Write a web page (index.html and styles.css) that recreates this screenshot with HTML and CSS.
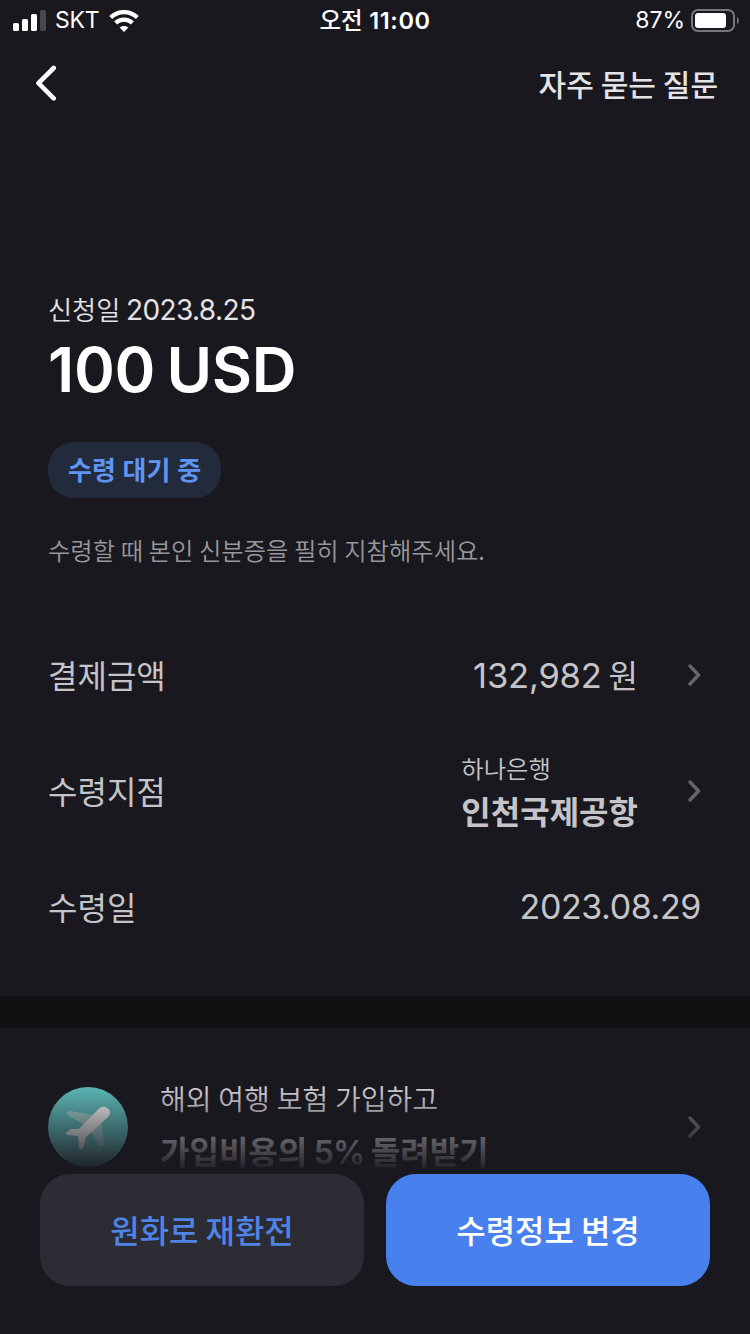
FILE: index.html
```html
<!DOCTYPE html>
<html lang="ko">
<head>
<meta charset="utf-8">
<title>환전 내역</title>
<link rel="stylesheet" href="styles.css">
</head>
<body>
<div class="screen">
  <header class="status">
    <div class="status-left">
      <svg class="signal" width="34" height="22" viewBox="0 0 34 22" fill="#fff">
        <rect x="0" y="13" width="6" height="8" rx="1.6"/>
        <rect x="9" y="9" width="6" height="12" rx="1.6"/>
        <rect x="18" y="4" width="6" height="17" rx="1.6"/>
        <rect x="27" y="0" width="6" height="21" rx="1.6" fill="#48474d"/>
      </svg>
      <span class="carrier">SKT</span>
      <svg class="wifi" width="30" height="22" viewBox="0 0 30 22" fill="none" stroke="#fff">
        <path d="M1.700 7.500C9.200 .3 20.800 .3 28.300 7.500" stroke-width="4.300"/>
        <path d="M6.600 12.900C11.300 8.500 18.700 8.500 23.400 12.900" stroke-width="4.300"/>
        <path d="M10.600 17.600C13 15.400 17 15.400 19.400 17.600L15 22Z" fill="#fff" stroke="none"/>
      </svg>
    </div>
    <div class="time"><span class="ko">오전</span> <span class="num">11:00</span></div>
    <div class="status-right">
      <span class="percent">87%</span>
      <svg class="battery" width="48" height="24" viewBox="0 0 48 24">
        <rect x="1" y="1" width="42" height="21" rx="6" fill="none" stroke="#77767b" stroke-width="2"/>
        <rect x="4" y="4" width="31" height="15" rx="3" fill="#fff"/>
        <path d="M46 8C48.500 9.500 48.500 13.500 46 15Z" fill="#77767b"/>
      </svg>
    </div>
  </header>

  <nav class="nav">
    <svg class="back" width="22" height="38" viewBox="0 0 22 38" fill="none" stroke="#fff" stroke-width="4.600" stroke-linecap="round" stroke-linejoin="round"><path d="M18.700 3L3.500 18.200L18.700 33.400"/></svg>
    <a class="faq">자주 묻는 질문</a>
  </nav>

  <main>
    <section class="summary">
      <p class="applied"><span class="ko">신청일</span> <span class="num">2023.8.25</span></p>
      <h1 class="amount">100 USD</h1>
      <span class="badge">수령 대기 중</span>
      <p class="notice">수령할 때 본인 신분증을 필히 지참해주세요.</p>
    </section>

    <section class="details">
      <div class="row">
        <span class="label">결제금액</span>
        <span class="value"><span class="num">132,982</span> <span class="ko">원</span></span>
        <svg class="chevron" width="14" height="24" viewBox="0 0 14 24"><path d="M2 3L10.500 12L2 21"/></svg>
      </div>
      <div class="row">
        <span class="label">수령지점</span>
        <span class="branch"><span class="bank">하나은행</span><strong class="place">인천국제공항</strong></span>
        <svg class="chevron" width="14" height="24" viewBox="0 0 14 24"><path d="M2 3L10.500 12L2 21"/></svg>
      </div>
      <div class="row">
        <span class="label">수령일</span>
        <span class="date num">2023.08.29</span>
      </div>
    </section>

    <section class="promo">
      <svg class="plane" width="80" height="80" viewBox="0 0 80 80">
        <circle cx="40" cy="40" r="40" fill="#62c4c2"/>
        <path d="M22 24L46 28L44 40L35 37L20 28.500C18 27 19 24 22 24Z" fill="#a5d9d7"/>
        <path d="M53 33L56 56C56 59 53 61 51 59L43 45L43 35Z" fill="#a5d9d7"/>
        <path d="M51 21.500C55 17.500 62 20.500 62 25.500C62 27.500 61 29 59 31L37 51V56L35 61C34 63 31 62 31 60L30 49L20 48C17.500 48 17 46 19 45L23 42L31 42Z" fill="#fff"/>
      </svg>
      <div class="promo-text">
        <span class="promo-top">해외 여행 보험 가입하고</span>
        <strong class="promo-main">가입비용의 <span class="num">5%</span> 돌려받기</strong>
      </div>
      <svg class="chevron" width="14" height="24" viewBox="0 0 14 24"><path d="M2 3L10.500 12L2 21"/></svg>
    </section>
  </main>

  <footer class="actions">
    <div class="fade"></div>
    <div class="buttons">
      <button class="btn secondary">원화로 재환전</button>
      <button class="btn primary">수령정보 변경</button>
    </div>
  </footer>
</div>
</body>
</html>
```
FILE: styles.css
```css
* { box-sizing: border-box; margin: 0; padding: 0; }
body {
  background: #19181e;
  font-family: "Noto Sans CJK KR", sans-serif;
  color: #fff;
}
svg { display: block; flex: none; }
.screen { position: relative; width: 750px; height: 1334px; overflow: hidden; background: #19181e; }
.num { font-family: Inter, sans-serif; }

.status { display: grid; grid-template-columns: 1fr auto 1fr; align-items: center; height: 40px; padding: 1px 11px 0 13px; line-height: 39px; white-space: nowrap; }
.status-left, .status-right { display: flex; align-items: center; }
.status-right { justify-content: flex-end; }
.carrier { margin-left: 8px; font-family: Inter, sans-serif; font-size: 23px; letter-spacing: -.2px; }
.wifi { margin-left: 10px; }
.time { margin-top: -1px; padding-right: 2px; font-size: 23.5px; font-weight: 500; }
.time .num { font-weight: 600; letter-spacing: .6px; }
.percent { margin-right: 6px; font-family: Inter, sans-serif; font-size: 23px; }

.nav { display: flex; justify-content: space-between; align-items: center; height: 88px; padding: 0 32px 0 35px; }
.faq { padding-bottom: 3px; font-size: 30px; line-height: 44px; font-weight: 500; word-spacing: -1.5px; color: #e4e3e6; }

.summary { display: flex; flex-direction: column; align-items: flex-start; padding: 161px 48px 0; white-space: nowrap; }
.applied { height: 40px; line-height: 40px; font-size: 26.2px; font-weight: 350; word-spacing: -1.7px; color: #e3e2e5; }
.applied .num { font-size: 28px; font-weight: 400; letter-spacing: -.6px; }
.amount { margin-top: 1px; height: 80px; line-height: 80px; font-family: Inter, sans-serif; font-size: 62px; font-weight: 600; letter-spacing: -.3px; word-spacing: -4px; }
.badge { margin-top: 32px; height: 56px; padding: 0 20px; border-radius: 26px; background: #212b3c; color: #5f95f2; font-size: 26px; line-height: 53px; font-weight: 700; word-spacing: -.5px; }
.notice { margin-top: 32px; height: 40px; line-height: 39px; font-size: 24.3px; font-weight: 350; word-spacing: -1.2px; color: #98979c; }

.details { padding: 47px 48px 31px; }
.row { display: flex; align-items: center; height: 116px; color: #c5c4c9; font-size: 32px; line-height: 44px; white-space: nowrap; }
.label { margin-right: auto; padding-bottom: 3px; }
.value { padding-bottom: 1px; word-spacing: -2px; }
.value .num { font-size: 34.5px; letter-spacing: -.2px; }
.date { padding-right: 1px; font-size: 34px; letter-spacing: -.4px; }
.branch { display: flex; flex-direction: column; padding-bottom: 3px; }
.bank { font-size: 24.3px; line-height: 40px; font-weight: 350; }
.place { font-size: 32px; line-height: 44px; font-weight: 700; }
.chevron { margin-left: 50px; fill: none; stroke: #66656d; stroke-width: 3.4; stroke-linecap: round; stroke-linejoin: round; }

.promo { display: flex; align-items: center; border-top: 32px solid #101012; padding: 0 48px; height: 230px; color: #e0dfe3; white-space: nowrap; }
.promo-text { display: flex; flex-direction: column; margin-left: 32px; margin-right: auto; padding-bottom: 3px; }
.promo-top { font-size: 28px; line-height: 52px; font-weight: 350; word-spacing: -1px; }
.promo-main { font-size: 32px; line-height: 52px; word-spacing: -2.5px; }
.promo-main .num { font-weight: 600; letter-spacing: -.8px; }
.promo .chevron { stroke: #77767e; }

.actions { position: absolute; left: 0; right: 0; bottom: 0; }
.fade { height: 96px; background: linear-gradient(rgba(25, 24, 30, 0), #19181e); }
.buttons { display: flex; gap: 22px; padding: 0 40px 48px; background: #19181e; }
.btn { flex: 1; height: 112px; padding-bottom: 3px; border: 0; border-radius: 30px; font-family: inherit; font-size: 32px; font-weight: 500; word-spacing: -2px; }
.secondary { background: #2c2c34; color: #5083e6; }
.primary { background: #4880ee; color: #fff; }
```
